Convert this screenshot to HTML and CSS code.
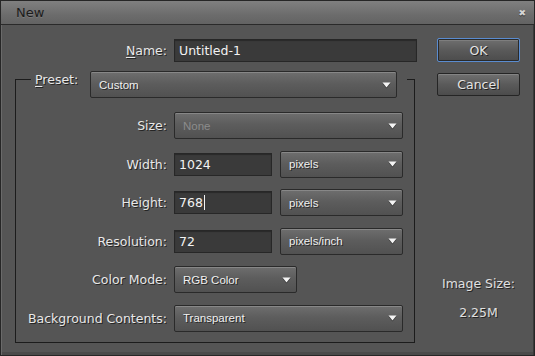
FILE: index.html
```html
<!DOCTYPE html>
<html lang="en">
<head>
  <meta charset="UTF-8" />
  <title>New</title>
  <link rel="stylesheet" href="styles.css">
</head>
<body>
  <div class="dialog">
    <div class="titlebar">
      <span class="title">New</span>
      <span class="close">&#x2716;</span>
    </div>

    <div class="content">
      <div class="main">
        <div class="name-row">
          <label class="label"><u>N</u>ame:</label>
          <div class="field wide">Untitled-1</div>
        </div>

        <fieldset class="group">
          <legend class="group-head">
            <label class="preset-label"><u>P</u>reset:</label>
            <div class="select preset">
              <span>Custom</span>
              <svg class="arrow" viewBox="0 0 9 6"><path d="M0.5 0.5h8L4.5 5.5z" /></svg>
            </div>
          </legend>

          <div class="rows">
            <label class="label">Size:</label>
            <div class="select full disabled">
              <span>None</span>
              <svg class="arrow" viewBox="0 0 9 6"><path d="M0.5 0.5h8L4.5 5.5z" /></svg>
            </div>

            <label class="label">Width:</label>
            <div class="pair">
              <div class="field num">1024</div>
              <div class="select unit">
                <span>pixels</span>
                <svg class="arrow" viewBox="0 0 9 6"><path d="M0.5 0.5h8L4.5 5.5z" /></svg>
              </div>
            </div>

            <label class="label">Height:</label>
            <div class="pair">
              <div class="field num">768<span class="caret"></span></div>
              <div class="select unit">
                <span>pixels</span>
                <svg class="arrow" viewBox="0 0 9 6"><path d="M0.5 0.5h8L4.5 5.5z" /></svg>
              </div>
            </div>

            <label class="label">Resolution:</label>
            <div class="pair">
              <div class="field num">72</div>
              <div class="select unit">
                <span>pixels/inch</span>
                <svg class="arrow" viewBox="0 0 9 6"><path d="M0.5 0.5h8L4.5 5.5z" /></svg>
              </div>
            </div>

            <label class="label">Color Mode:</label>
            <div class="select unit">
              <span>RGB Color</span>
              <svg class="arrow" viewBox="0 0 9 6"><path d="M0.5 0.5h8L4.5 5.5z" /></svg>
            </div>

            <label class="label">Background Contents:</label>
            <div class="select full">
              <span>Transparent</span>
              <svg class="arrow" viewBox="0 0 9 6"><path d="M0.5 0.5h8L4.5 5.5z" /></svg>
            </div>
          </div>
        </fieldset>
      </div>

      <div class="side">
        <button class="btn ok">OK</button>
        <button class="btn">Cancel</button>
        <div class="image-size">
          <div>Image Size:</div>
          <div class="size-value">2.25M</div>
        </div>
      </div>
    </div>
  </div>
</body>
</html>
```

FILE: styles.css
```css
html, body {
  margin: 0;
  padding: 0;
  background: #535353;
}

.dialog {
  width: 535px;
  height: 356px;
  box-sizing: border-box;
  border: 1px solid #262626;
  box-shadow: inset 1px 0 0 #6a6a6a, inset -1px 0 0 #3a3a3a, inset 0 -3px 0 #4a4a4a;
  background: #555555;
  font-family: "DejaVu Sans", sans-serif;
  color: #e6e6e6;
}

.titlebar {
  height: 23px;
  border-bottom: 1px solid #2a2a2a;
  background: linear-gradient(#808080, #6c6c6c 60%, #636363);
  display: flex;
  align-items: center;
  justify-content: space-between;
  padding: 0 8px 0 15px;
}

.title {
  font-size: 13px;
  color: #1c1c1c;
  text-shadow: 0 1px 0 rgba(255, 255, 255, 0.12);
}

.close {
  font-size: 9px;
  color: #d4d4d4;
  text-shadow: 0 1px 0 #333;
}

.content {
  display: flex;
}

.main {
  width: 402px;
  padding: 14px 0 0 14px;
}

/* labels */
.label {
  font-size: 12.5px;
  text-align: right;
  color: #e8e8e8;
  text-shadow: 1px 1px 0 #252525;
  align-self: center;
}

.label u, .preset-label u {
  text-decoration-thickness: 1px;
  text-underline-offset: 2px;
}

.name-row {
  display: flex;
  align-items: center;
  gap: 7px;
}
.name-row .label {
  width: 152px;
}

/* text fields */
.field {
  height: 23px;
  box-sizing: border-box;
  background: #3a3a3a;
  border: 1px solid #272727;
  box-shadow: inset 0 1px 1px rgba(0, 0, 0, 0.3);
  padding-left: 4px;
  font-size: 12.5px;
  line-height: 21px;
  color: #f2f2f2;
  display: flex;
  align-items: center;
}
.field.wide {
  flex: 1;
}
.field.num {
  width: 98px;
}

.caret {
  display: inline-block;
  width: 1px;
  height: 15px;
  margin-left: 1px;
  background: #f2f2f2;
}

/* the preset frame */
.group {
  margin: 9px 0 0 0;
  padding: 24px 0 10px 0;
  width: 400px;
  box-sizing: border-box;
  border: 1px solid #1c1c1c;
}

.group-head {
  margin-left: 15px;
  padding: 0 10px 0 4px;
  height: 17px;
  display: flex;
  align-items: flex-start;
}

.preset-label {
  width: 55px;
  font-size: 12.5px;
  line-height: 17px;
  color: #e8e8e8;
  text-shadow: 1px 1px 0 #252525;
}

.rows {
  display: grid;
  grid-template-columns: 151px 229px;
  column-gap: 7px;
  row-gap: 11.5px;
}

.pair {
  display: flex;
  align-items: center;
  gap: 8px;
}

/* dropdowns */
.select {
  height: 27px;
  box-sizing: border-box;
  border: 1px solid #2a2a2a;
  border-radius: 2px;
  background: linear-gradient(#6e6e6e, #5d5d5d 45%, #515151);
  box-shadow: inset 0 1px 0 rgba(255, 255, 255, 0.18);
  display: flex;
  align-items: center;
  justify-content: space-between;
  padding: 0 5px 0 8px;
  font-family: "Liberation Sans", sans-serif;
  font-size: 11.5px;
  color: #f0f0f0;
  text-shadow: 1px 1px 0 #2a2a2a;
}
.select.preset {
  width: 307px;
  flex-shrink: 0;
}
.select.full {
  width: 229px;
}
.select.unit {
  width: 123px;
}
.select.disabled span {
  color: #8c8c8c;
  text-shadow: none;
}

.arrow {
  width: 9px;
  height: 6px;
  fill: #f4f4f4;
  filter: drop-shadow(0 1px 0 #333);
}

/* right column */
.side {
  width: 83px;
  margin-left: 20px;
  padding-top: 13px;
  display: flex;
  flex-direction: column;
  align-items: center;
}

.btn {
  width: 83px;
  height: 23px;
  border: 1px solid #252525;
  border-radius: 2px;
  background: linear-gradient(#707070, #5a5a5a 50%, #4c4c4c);
  box-shadow: inset 0 1px 0 rgba(255, 255, 255, 0.15);
  font-family: "DejaVu Sans", sans-serif;
  font-size: 12.5px;
  color: #e4e4e4;
  text-shadow: 1px 1px 0 #222;
  padding: 0;
}
.btn.ok {
  height: 24px;
  border-color: #5a8cd0;
  box-shadow: inset 0 0 0 1px #2a2a2a, inset 0 2px 0 rgba(255, 255, 255, 0.12);
}
.btn + .btn {
  margin-top: 11px;
}

.image-size {
  margin-top: 180px;
  text-align: center;
  font-size: 12.5px;
  line-height: 16px;
  color: #e0e0e0;
  text-shadow: 1px 1px 0 #252525;
  white-space: nowrap;
}
.size-value {
  margin-top: 13px;
}
```
